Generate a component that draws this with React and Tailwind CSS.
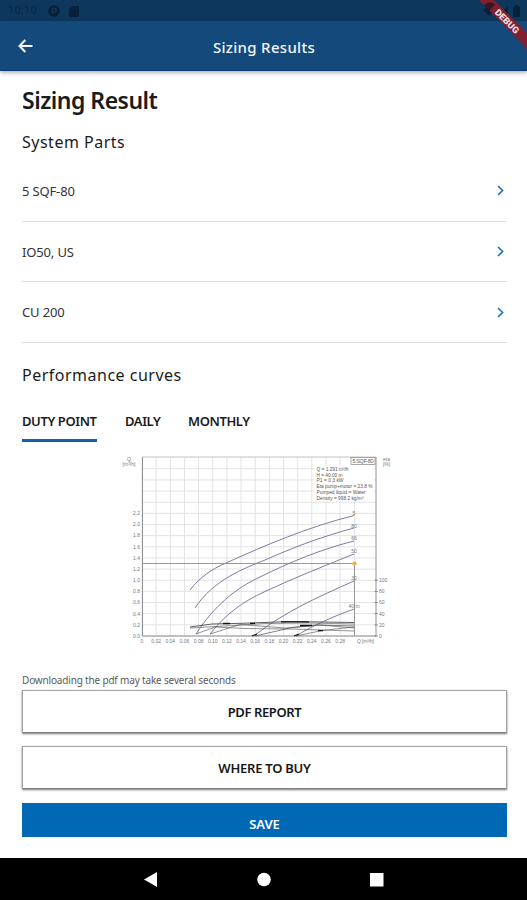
import React, { useState } from "react";

const parts = ["5 SQF-80", "IO50, US", "CU 200"];

const tabs = [
  { label: "DUTY POINT", className: "w-[75px]" },
  { label: "DAILY", className: "w-[35px]" },
  { label: "MONTHLY", className: "w-[62px]" },
];

const pumpCurves = [
  "M190 590C200 577 212 569 226 563C266 545 308 527 354 515.5",
  "M195 608C213 580 245 568 265 560C294 547 324 536 354 528",
  "M196 634C214 606 236 588 260 577C290 562 322 549 354 541",
  "M210 634C226 614 242 602 265 591.5C294 578 324 566 354 554",
  "M255 635C286 611 318 597 354 581",
  "M296 636C314 625 332 617 354 609",
];

const efficiencyCurves = [
  { d: "M190 627L212 624L245 623.2L290 621.5L354 622.5", width: 0.9 },
  { d: "M190 628L225 626L265 623.5L310 623L354 624", width: 0.6 },
  { d: "M196 634L215 627L245 628.5L290 629L354 631", width: 0.6 },
  { d: "M210 634L240 624.5L285 628L320 625L354 628", width: 0.6 },
  { d: "M255 636L290 628L315 625L354 626", width: 0.7 },
  { d: "M296 636L322 630.5L354 627", width: 0.6 },
];

const curveLabels = [
  { text: "5", y: 514.5 },
  { text: "80", y: 527.5 },
  { text: "66", y: 540 },
  { text: "50", y: 552.5 },
  { text: "30", y: 579.5 },
  { text: "40 m", y: 607.5 },
];

const dutyInfo = [
  { text: "Q = 1.291 m³/h", width: 32 },
  { text: "H = 40.00 m", width: 26 },
  { text: "P1 = 0.3 kW", width: 27 },
  { text: "Eta pump+motor = 23.8 %", width: 56 },
  { text: "Pumped liquid = Water", width: 49 },
  { text: "Density = 998.2 kg/m³", width: 47 },
];

const StatusBar = () => (
  <div className="h-[21px] bg-[#0d375d] flex items-center justify-between pl-2 pr-[5px] text-[#0a2745]">
    <div className="flex items-center pt-px">
      <span className="w-[30px] text-[11px] tracking-[0.3px] font-['Roboto',sans-serif]">
        10:10
      </span>
      <svg className="ml-[10px]" width="12" height="12" viewBox="0 0 12 12">
        <circle cx="6" cy="6" r="5.8" fill="#08203a" />
        <path d="M4.5 9V3.5h2a1.7 1.7 0 0 1 0 3.4h-2" fill="none" stroke="#0d375d" strokeWidth="1.3" />
      </svg>
      <svg className="ml-[9px]" width="10" height="11" viewBox="0 0 10 11">
        <path d="M3.5 0H9.2Q10 0 10 1V10Q10 11 9 11H1Q0 11 0 10V3.5Z" fill="#08203a" />
        <path d="M4 1.5V3.5M6 1.5V3.5M8 1.5V3.5" stroke="#0d375d" strokeWidth="0.6" />
      </svg>
    </div>
    <svg width="40" height="14" viewBox="0 0 40 14" fill="#08203a">
      <path d="M1 5.5Q7 0 13 5.5L7 12Z" />
      <path d="M26 2V12H17Z" />
      <path d="M31 2.5H33V1H36V2.5H38V13H31Z" />
    </svg>
  </div>
);

const DebugBanner = () => (
  <svg className="absolute right-0 top-0" width="52" height="52" viewBox="0 0 52 52">
    <path d="M4 0H19L52 33V49Z" fill="#7f1f30" />
    <path d="M9 5.5Q15 -0.5 20 4.5L14 11Z" fill="#1d1420" opacity="0.75" />
    <text
      x="32"
      y="24.5"
      transform="rotate(45 32 21.5)"
      textAnchor="middle"
      textLength="30"
      lengthAdjust="spacingAndGlyphs"
      className="text-[9px] font-black font-['Roboto',sans-serif]"
      fill="#e9dfe3"
    >
      DEBUG
    </text>
  </svg>
);

const PerformanceChart = () => {
  const cols = Array.from({ length: 15 }, (_, i) => 142 + i * 14.15);
  const rows = Array.from({ length: 16 }, (_, i) => 636 - i * 11.15);

  return (
    <svg
      className="block w-[285px] h-[200px] ml-[93px] font-['Liberation_Sans',sans-serif]"
      viewBox="115 450 285 200"
    >
      <g stroke="#e3e3e3" strokeWidth="1">
        {cols.map((x) => (
          <line key={x} x1={x} y1="457" x2={x} y2="636" />
        ))}
        {rows.map((y) => (
          <line key={y} x1="142" y1={y} x2="376" y2={y} />
        ))}
        <line x1="354.5" y1="500" x2="354.5" y2="636" />
      </g>
      <rect x="314" y="466" width="60" height="35" fill="#ffffff" />
      <path d="M142.5 457V636H376V457" fill="none" stroke="#858589" strokeWidth="0.9" />
      <path d="M142 457H376" stroke="#bbbbbb" strokeWidth="0.9" />
      <path d="M142 563.5H354.5V636" fill="none" stroke="#8c8c8c" strokeWidth="0.9" />
      {rows.slice(0, 6).map((y) => (
        <path key={y} d={`M374.5 ${y}H378`} stroke="#777777" strokeWidth="0.8" />
      ))}

      {/* power curves at each head */}
      <g fill="none" stroke="#7b7f9c" strokeWidth="1">
        {pumpCurves.map((d) => (
          <path key={d} d={d} />
        ))}
      </g>
      <g fill="none" stroke="#4c4c50">
        {efficiencyCurves.map((c) => (
          <path key={c.d} d={c.d} strokeWidth={c.width} />
        ))}
        <path d="M281 621.8H309M223 623.5H230M250 623.3H255" stroke="#111111" strokeWidth="1.3" />
        <path d="M252 636L257 634M294 636L299 634M318 630.7H323M300 625.5H312" stroke="#111111" strokeWidth="1.3" />
      </g>

      <g fill="#777777" fontSize="5">
        {rows.slice(0, 12).map((y, i) => (
          <text key={y} x="140" y={y + 1.8} textAnchor="end">
            {(i * 0.2).toFixed(1)}
          </text>
        ))}
        {rows.slice(0, 6).map((y, i) => (
          <text key={y} x="379" y={y + 1.8}>
            {i * 20}
          </text>
        ))}
        {cols.map((x, i) => (
          <text key={x} x={x} y="642.5" textAnchor="middle">
            {i === 0 ? "0" : (i * 0.02).toFixed(2)}
          </text>
        ))}
        <text x="357" y="642.5" textLength="17">Q [m³/h]</text>
        <text x="129" y="460.5" textAnchor="middle">Q</text>
        <text x="129" y="466" textAnchor="middle" textLength="13">[m³/h]</text>
        <text x="386.5" y="460.5" textAnchor="middle">eta</text>
        <text x="386.5" y="466" textAnchor="middle">[%]</text>
        {curveLabels.map((l) => (
          <text key={l.text} x="354" y={l.y} textAnchor="middle">
            {l.text}
          </text>
        ))}
      </g>

      <rect x="351" y="457.5" width="24" height="7" fill="#ffffff" stroke="#858585" strokeWidth="0.7" />
      <text x="352.5" y="463.2" textLength="21" fontSize="5.5" fill="#666666">
        5 SQF-80
      </text>
      <g fill="#555555" fontSize="5">
        {dutyInfo.map((row, i) => (
          <text
            key={row.text}
            x="316.5"
            y={470.8 + i * 5.8}
            textLength={row.width}
            lengthAdjust="spacingAndGlyphs"
          >
            {row.text}
          </text>
        ))}
      </g>
      <circle cx="354.5" cy="563.5" r="2.1" fill="#f0b429" />
    </svg>
  );
};

const OutlinedButton = ({ label, textClass }) => (
  <button className="block w-full h-[43px] pb-[2px] bg-white border border-[#a3a3a3] border-b-[#808080] shadow-[0_1px_2px_rgba(0,0,0,0.55)] text-center">
    <span className={`text-[13px] font-semibold text-[#161616] ${textClass}`}>
      {label}
    </span>
  </button>
);

const App = () => {
  const [activeTab, setActiveTab] = useState("DUTY POINT");

  return (
    <div className="w-[527px] h-[900px] bg-white relative flex flex-col overflow-hidden font-['Noto_Sans',sans-serif] text-[#1b1b1b]">
      <StatusBar />
      <header className="h-[50px] shrink-0 bg-[#134a7b] border-b border-[#0b3a7a] shadow-[0_2px_4px_rgba(0,0,0,0.3)] flex items-center px-[18px] text-[#f4f7fb]">
        <button className="w-[14px]" aria-label="Back">
          <svg width="15" height="14" viewBox="0 0 15 14" fill="none" stroke="currentColor" strokeWidth="2">
            <path d="M7.3 1L1.5 7L7.3 13M1.5 7H14.5" />
          </svg>
        </button>
        <h1 className="flex-1 text-center pr-[13px] pt-[3px] text-[15px] font-medium tracking-[0.3px] whitespace-nowrap">
          Sizing Results
        </h1>
      </header>

      <main className="flex-1 px-[22px] pr-[20px] flex flex-col">
        <h2 className="mt-[13px] h-8 leading-8 text-[23px] font-semibold tracking-[-0.5px] whitespace-nowrap">
          Sizing Result
        </h2>
        <h3 className="mt-[14px] h-6 leading-6 text-[16px] font-normal tracking-[0.5px]">
          System Parts
        </h3>
        <ul className="mt-[7px]">
          {parts.map((part) => (
            <li
              key={part}
              className="h-[60.7px] flex items-center justify-between border-b border-[#dfdfdf] text-[13px] tracking-[-0.15px] text-[#333333]"
            >
              <span className="pt-[2px]">{part}</span>
              <svg className="mr-[3px]" width="7" height="11" viewBox="0 0 7 11" fill="none" stroke="#1f6fb5" strokeWidth="1.6">
                <path d="M1 1L5.6 5.5L1 10" />
              </svg>
            </li>
          ))}
        </ul>
        <h3 className="mt-[20px] h-6 leading-6 text-[16px] font-normal tracking-[0.5px]">
          Performance curves
        </h3>
        <div className="mt-[22px] h-[33px] flex gap-7">
          {tabs.map((tab) => (
            <button
              key={tab.label}
              onClick={() => setActiveTab(tab.label)}
              className={`text-[13px] leading-6 font-semibold tracking-[-0.4px] whitespace-nowrap text-left flex items-start border-b-[3px] ${tab.className} ${
                activeTab === tab.label ? "border-[#165fae]" : "border-transparent"
              }`}
            >
              {tab.label}
            </button>
          ))}
        </div>
        <div className="mt-[8px]">
          <PerformanceChart />
        </div>
        <p className="mt-[22px] h-[18px] leading-[16px] text-[10px] tracking-[-0.17px] text-[#5a5a5a]">
          Downloading the pdf may take several seconds
        </p>
        <div className="h-[147px] flex flex-col gap-[13px]">
          <OutlinedButton label="PDF REPORT" textClass="tracking-[-0.4px]" />
          <OutlinedButton label="WHERE TO BUY" textClass="tracking-[-0.25px]" />
          <button className="mt-px h-[34px] shrink-0 w-full bg-[#0068b4] text-center text-white text-[13px] font-semibold tracking-[-0.1px] pt-[8px] leading-6 overflow-hidden">
            SAVE
          </button>
        </div>
      </main>

      <nav className="h-[42px] shrink-0 bg-black">
        <svg width="527" height="42" viewBox="0 0 527 42" fill="#ffffff">
          <path d="M144 21.5L157 14V29Z" />
          <circle cx="264" cy="21.5" r="6.8" />
          <rect x="370" y="15" width="13.5" height="13.5" />
        </svg>
      </nav>
      <DebugBanner />
    </div>
  );
};

export default App;
